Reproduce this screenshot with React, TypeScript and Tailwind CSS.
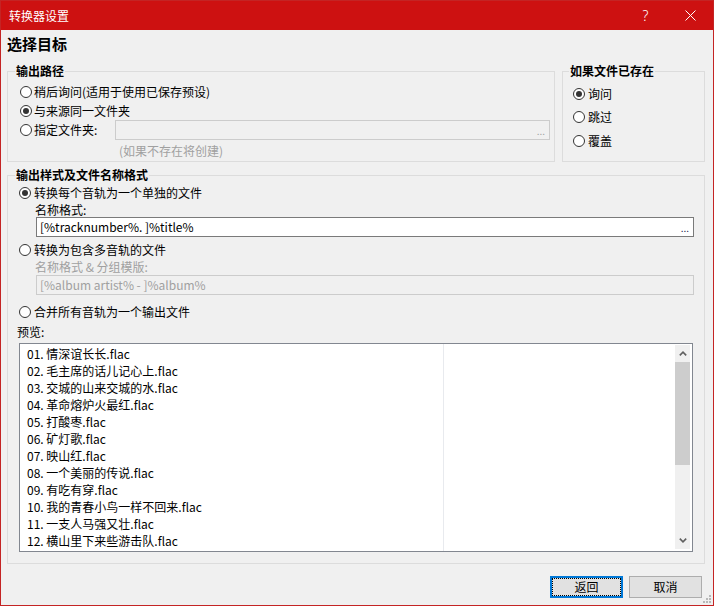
import React from 'react';

const tracks = [
  '01. 情深谊长长.flac',
  '02. 毛主席的话儿记心上.flac',
  '03. 交城的山来交城的水.flac',
  '04. 革命熔炉火最红.flac',
  '05. 打酸枣.flac',
  '06. 矿灯歌.flac',
  '07. 映山红.flac',
  '08. 一个美丽的传说.flac',
  '09. 有吃有穿.flac',
  '10. 我的青春小鸟一样不回来.flac',
  '11. 一支人马强又壮.flac',
  '12. 横山里下来些游击队.flac',
];

function Radio({ checked = false }: { checked?: boolean }) {
  return (
    <span className="w-[12px] h-[12px] rounded-full border border-[#333333] bg-white flex items-center justify-center shrink-0">
      {checked && <span className="w-[6px] h-[6px] rounded-full bg-[#333333]" />}
    </span>
  );
}

function RadioRow({ label, checked, h, gap }: { label: string; checked?: boolean; h: string; gap: string }) {
  return (
    <div className={`flex items-center ${h}`}>
      <Radio checked={checked} />
      <span className={`${gap} leading-[16px] whitespace-nowrap`}>{label}</span>
    </div>
  );
}

export default function App() {
  return (
    <div className="w-[714px] h-[606px] relative flex flex-col border border-[#c42424] bg-[#f0f0f0] text-[12px] text-black font-['Noto_Sans_CJK_SC','Noto_Sans',sans-serif] overflow-hidden">
      {/* title bar */}
      <div className="h-[29px] bg-[#cd1111] flex items-center text-white shrink-0">
        <span className="pl-[8px] leading-[16px]">转换器设置</span>
        <div className="ml-auto flex h-full">
          <div className="w-[45px] flex items-center justify-center text-[14px] font-light font-['Noto_Sans',sans-serif]">?</div>
          <div className="w-[45px] flex items-center justify-center">
            <svg width="11" height="11" viewBox="0 0 11 11">
              <path d="M0.5 0.5 L10.5 10.5 M10.5 0.5 L0.5 10.5" stroke="white" strokeWidth="1" />
            </svg>
          </div>
        </div>
      </div>

      <div className="flex-1 flex flex-col pl-[6px] pr-[8px]">
        <div className="pt-[4px] h-[24px] leading-[20px] text-[15px] font-bold">选择目标</div>

        {/* top groups */}
        <div className="mt-[9px] flex gap-[7px] items-stretch">
          <fieldset className="w-[548px] border border-[#dcdcdc]">
            <legend className="ml-[7px] px-[1px] h-[16px] leading-[16px] font-bold">输出路径</legend>
            <div className="pt-[3px] pb-[1px] pl-[12px] pr-[4px]">
              <RadioRow label="稍后询问(适用于使用已保存预设)" h="h-[19px]" gap="ml-[2px]" />
              <RadioRow label="与来源同一文件夹" checked h="h-[19px]" gap="ml-[2px]" />
              <div className="flex items-center h-[20px]">
                <Radio />
                <span className="ml-[2px] leading-[16px]">指定文件夹:</span>
                <div className="ml-auto w-[435px] h-[20px] border border-[#cccccc] bg-[#f0f0f0] flex items-end justify-end pr-[4px] pb-[3px] text-[#a0a0a0] text-[10px] leading-[10px]">...</div>
              </div>
              <div className="mt-[2px] h-[18px] leading-[18px] ml-[99px] text-[#a0a0a0]">(如果不存在将创建)</div>
            </div>
          </fieldset>

          <fieldset className="flex-1 border border-[#dcdcdc]">
            <legend className="ml-[6px] px-[1px] h-[16px] leading-[16px] font-bold">如果文件已存在</legend>
            <div className="pt-[3px] pl-[10px]">
              <RadioRow label="询问" checked h="h-[23.5px]" gap="ml-[3px]" />
              <RadioRow label="跳过" h="h-[23.5px]" gap="ml-[3px]" />
              <RadioRow label="覆盖" h="h-[23.5px]" gap="ml-[3px]" />
            </div>
          </fieldset>
        </div>

        {/* output style group */}
        <fieldset className="mt-[5px] border border-[#dcdcdc]">
          <legend className="ml-[7px] px-[1px] h-[16px] leading-[16px] font-bold">输出样式及文件名称格式</legend>
          <div className="pb-[11px] flex flex-col">
            <div className="mt-[1px] ml-[11px]">
              <RadioRow label="转换每个音轨为一个单独的文件" checked h="h-[18px]" gap="ml-[3px]" />
            </div>
            <div className="ml-[27px] h-[15px] leading-[15px]">名称格式:</div>
            <div className="ml-[28px] mr-[10px] h-[20px] border border-[#7a7a7a] bg-white flex items-center pl-[3px] pr-[4px]">
              <span className="leading-[16px]">[%tracknumber%. ]%title%</span>
              <span className="ml-auto self-end pb-[3px] text-[10px] leading-[10px] text-[#1a1a4a]">...</span>
            </div>
            <div className="mt-[4px] ml-[11px]">
              <RadioRow label="转换为包含多音轨的文件" h="h-[18px]" gap="ml-[3px]" />
            </div>
            <div className="ml-[27px] h-[15px] leading-[15px] text-[#a0a0a0]">名称格式 &amp; 分组模版:</div>
            <div className="mt-[1px] ml-[28px] mr-[10px] h-[20px] border border-[#cccccc] bg-[#f0f0f0] flex items-center pl-[3px] text-[#a0a0a0]">
              <span className="leading-[16px]">[%album artist% - ]%album%</span>
            </div>
            <div className="mt-[8px] ml-[11px]">
              <RadioRow label="合并所有音轨为一个输出文件" h="h-[18px]" gap="ml-[3px]" />
            </div>
            <div className="mt-[3px] ml-[9px] h-[16px] leading-[16px]">预览:</div>

            {/* preview list */}
            <div className="mt-[3px] mx-[11px] h-[209px] border border-[#828790] bg-white flex">
              <div className="w-[424px] border-r border-[#e8eaee] pt-[1px] pl-[7px]">
                {tracks.map(t => (
                  <div key={t} className="h-[17px] leading-[17px] whitespace-nowrap">{t}</div>
                ))}
              </div>
              <div className="flex-1" />
              <div className="w-[15px] mt-[1px] mb-[2px] mr-[2px] bg-[#f0f0f0] flex flex-col">
                <div className="h-[17px] flex items-center justify-center">
                  <svg width="8" height="5" viewBox="0 0 8 5">
                    <path d="M0.8 4.4 L4 1.2 L7.2 4.4" fill="none" stroke="#606060" strokeWidth="1.6" />
                  </svg>
                </div>
                <div className="h-[103px] bg-[#cdcdcd]" />
                <div className="flex-1" />
                <div className="h-[17px] flex items-center justify-center">
                  <svg width="8" height="5" viewBox="0 0 8 5">
                    <path d="M0.8 0.6 L4 3.8 L7.2 0.6" fill="none" stroke="#606060" strokeWidth="1.6" />
                  </svg>
                </div>
              </div>
            </div>
          </div>
        </fieldset>

        {/* buttons */}
        <div className="mt-[12px] flex justify-end gap-[6px] pr-[3px]">
          <button className="w-[73px] h-[22px] border-2 border-[#0078d7] bg-[#e1e1e1]">
            <span className="w-full h-full border border-dotted border-black flex items-center justify-center leading-[16px]">返回</span>
          </button>
          <button className="w-[73px] h-[22px] border border-[#adadad] bg-[#e1e1e1] flex items-center justify-center leading-[16px]">取消</button>
        </div>
      </div>

      {/* size grip */}
      <svg className="absolute right-[1px] bottom-[1px]" width="11" height="11" viewBox="0 0 11 11">
        <rect x="8" y="2" width="2" height="2" fill="#b8b8b8" />
        <rect x="5" y="5" width="2" height="2" fill="#b8b8b8" />
        <rect x="8" y="5" width="2" height="2" fill="#b8b8b8" />
        <rect x="2" y="8" width="2" height="2" fill="#b8b8b8" />
        <rect x="5" y="8" width="2" height="2" fill="#b8b8b8" />
        <rect x="8" y="8" width="2" height="2" fill="#b8b8b8" />
      </svg>
    </div>
  );
}
